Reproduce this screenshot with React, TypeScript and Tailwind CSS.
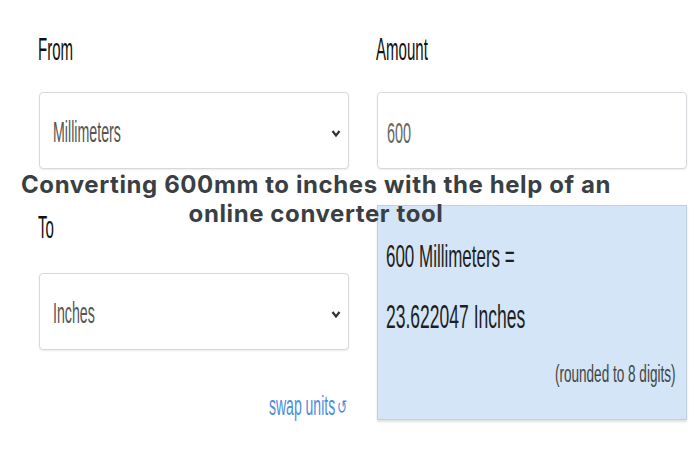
import React from "react"

function Chevron() {
  return (
    <svg width="10" height="10" viewBox="0 0 10 10" className="shrink-0">
      <polyline points="1.5,3 5,7.5 8.5,3" fill="none" stroke="#333" strokeWidth="2.2" />
    </svg>
  )
}

function Select({ value }: { value: string }) {
  return (
    <div className="h-[77px] w-[310px] rounded-[4px] border border-[#d5d9dd] bg-white shadow-[0_1px_2px_rgba(0,0,0,0.08)] flex items-center justify-between pl-[13px] pr-[7px] pt-[4px]">
      <span className="inline-block origin-left scale-x-[0.49] whitespace-nowrap text-[29px] leading-[29px] text-[#555]">
        {value}
      </span>
      <Chevron />
    </div>
  )
}

export default function App() {
  return (
    <div
      className="relative w-[700px] h-[450px] bg-white overflow-hidden"
      style={{ fontFamily: '"Liberation Sans", Arial, sans-serif' }}
    >
      <div className="flex gap-[27px] pl-[38px] pt-[33px]">
        {/* left column */}
        <div className="flex flex-col w-[311px]">
          <span className="inline-block origin-left scale-x-[0.47] whitespace-nowrap text-[32px] leading-[32px] text-[#111]">
            From
          </span>
          <div className="mt-[27px] pl-px">
            <Select value="Millimeters" />
          </div>
          <span className="mt-[42px] inline-block origin-left scale-x-[0.47] whitespace-nowrap text-[32px] leading-[32px] text-[#111]">
            To
          </span>
          <div className="mt-[30px] pl-px">
            <Select value="Inches" />
          </div>
          <div className="mt-[42px] flex justify-end items-center text-[#4a8de0]">
            <span className="w-[68px] overflow-visible">
              <span className="inline-block origin-left scale-x-[0.5] whitespace-nowrap text-[28px] leading-[28px]">
                swap units
              </span>
            </span>
            <span className="w-[12px] text-[20px] leading-[28px]" style={{ fontFamily: '"DejaVu Sans", sans-serif' }}>
              <span className="inline-block origin-left scale-x-[0.6]">↺</span>
            </span>
          </div>
        </div>

        {/* right column */}
        <div className="flex flex-col w-[310px]">
          <span className="inline-block origin-left scale-x-[0.47] whitespace-nowrap text-[32px] leading-[32px] text-[#111]">
            Amount
          </span>
          <div className="mt-[27px] ml-px h-[77px] w-[310px] rounded-[4px] border border-[#d5d9dd] bg-white shadow-[0_1px_2px_rgba(0,0,0,0.08)] flex items-center pl-[9px] pt-[4px]">
            <span className="inline-block origin-left scale-x-[0.48] whitespace-nowrap text-[30px] leading-[30px] text-[#666]">
              600
            </span>
          </div>
          <div className="mt-[36px] ml-px h-[215px] w-[310px] border border-[#bfcfdf] bg-[#d4e5f7] shadow-[0_2px_2px_rgba(0,0,0,0.12)] flex flex-col pl-[8px] pr-[10px] pt-[34px]">
            <span className="inline-block origin-left scale-x-[0.53] whitespace-nowrap text-[32px] leading-[32px] text-[#1e1e1e]">
              600 Millimeters =
            </span>
            <span className="mt-[27px] inline-block origin-left scale-x-[0.515] whitespace-nowrap text-[34px] leading-[34px] text-[#1e1e1e]">
              23.622047 Inches
            </span>
            <div className="mt-[30px] flex justify-end">
              <span className="inline-block origin-right scale-x-[0.59] whitespace-nowrap text-[23px] leading-[23px] text-[#444]">
                (rounded to 8 digits)
              </span>
            </div>
          </div>
        </div>
      </div>

      {/* caption overlay */}
      <div
        className="absolute left-0 top-[170px] w-[632px] text-center text-[24px] leading-[29px] font-bold tracking-[0.025em] text-[#3a3f44]"
        style={{ fontFamily: 'Inter, "Noto Sans", sans-serif' }}
      >
        Converting 600mm to inches with the help of an
        <br />
        online converter tool
      </div>
    </div>
  )
}
